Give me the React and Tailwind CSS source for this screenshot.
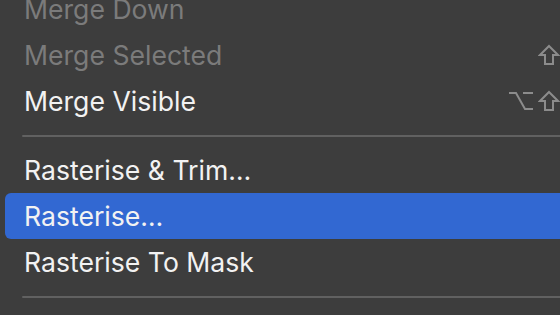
const ShiftIcon = () => (
    <svg width="22" height="22" viewBox="0 0 22 22" fill="none" stroke="currentColor" strokeWidth="2" strokeLinejoin="miter">
        <path d="M11 2 L20 11 L15 11 L15 20 L7 20 L7 11 L2 11 Z" />
    </svg>
);

const OptionIcon = () => (
    <svg width="26" height="22" viewBox="0 0 26 22" fill="none" stroke="currentColor" strokeWidth="2">
        <path d="M1 3 L8 3 L17 19 L25 19 M15 3 L25 3" />
    </svg>
);

const CmdKey = () => <span className="text-[24px] leading-none">⌘</span>;

const ITEMS = [
    { label: "Merge Down", disabled: true, keys: [] },
    { label: "Merge Selected", disabled: true, keys: ["shift"] },
    { label: "Merge Visible", keys: ["option", "shift"] },
    { sep: true },
    { label: "Rasterise & Trim…" },
    { label: "Rasterise…", active: true },
    { label: "Rasterise To Mask" },
    { sep: true },
    { label: "Flip Horizontal" },
];

function Row({ item }) {
    const text = item.disabled ? "text-[#7b7b7b]" : "text-[#f2f2f2]";
    return (
        <div
            className={`mx-[5px] h-[46px] flex items-center pl-[19px] pr-[21px] rounded-[6px] ${
                item.active ? "bg-[#3268d2]" : ""
            }`}
        >
            <span className={`flex-1 text-[26.6px] pt-[2px] ${text}`}>{item.label}</span>
            {item.keys && item.keys.length > 0 && (
                <span className="flex items-center gap-[4px] text-[#8c8c8c]">
                    {item.keys.map((k, i) =>
                        k === "shift" ? <ShiftIcon key={i} /> : <OptionIcon key={i} />
                    )}
                    <span className="w-[2px]" />
                    <CmdKey />
                    <span className="text-[24px] ml-[2px]">E</span>
                </span>
            )}
        </div>
    );
}

export default function App() {
    return (
        <div
            className="w-[560px] h-[315px] overflow-hidden bg-[#3d3d3d]"
            style={{ fontFamily: "Inter, 'DejaVu Sans', sans-serif" }}
        >
            <div className="w-[640px] mt-[-14px]">
                {ITEMS.map((item, i) =>
                    item.sep ? (
                        <div key={i} className="h-[23px] pt-[11px] pl-[22px] pr-[5px]">
                            <div className="h-[2px] bg-[#616161] rounded-full" />
                        </div>
                    ) : (
                        <Row key={i} item={item} />
                    )
                )}
            </div>
        </div>
    );
}
